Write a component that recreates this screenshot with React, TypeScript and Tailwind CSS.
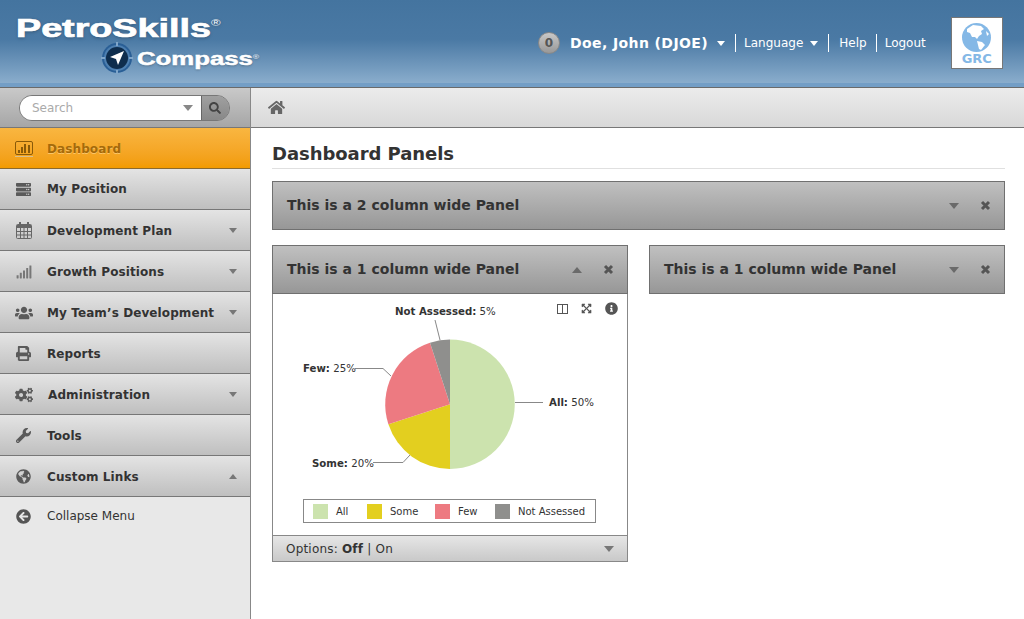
import type { ReactNode } from 'react'
import {
  FaArrowCircleLeft,
  FaCogs,
  FaExpandArrowsAlt,
  FaGlobeAmericas,
  FaHome,
  FaInfoCircle,
  FaPrint,
  FaSearch,
  FaServer,
  FaSignal,
  FaUsers,
  FaWrench,
} from 'react-icons/fa'

function Caret({ up = false, small = false, className = 'text-white' }: { up?: boolean; small?: boolean; className?: string }) {
  return (
    <svg width={small ? 8 : 10} height={small ? 5 : 6} viewBox="0 0 10 6" className={className}>
      <polygon points={up ? '0,6 10,6 5,0' : '0,0 10,0 5,6'} fill="currentColor" />
    </svg>
  )
}

function BarsIcon() {
  return (
    <svg width="18" height="16" viewBox="0 0 18 16" className="text-[#8a5a08]">
      <rect x="0.5" y="0.5" width="17" height="13" rx="1.5" fill="none" stroke="currentColor" />
      <rect x="3" y="9" width="2" height="3" fill="currentColor" />
      <rect x="6" y="6" width="2" height="6" fill="currentColor" />
      <rect x="9" y="3" width="2" height="9" fill="currentColor" />
      <rect x="13" y="4" width="2" height="8" fill="currentColor" />
      <rect x="0" y="15" width="18" height="1" fill="#d8c090" />
    </svg>
  )
}

function CalendarIcon() {
  return (
    <svg width="16" height="17" viewBox="0 0 16 17" className="text-[#666]">
      <rect x="0.5" y="2.5" width="15" height="14" rx="1" fill="none" stroke="currentColor" />
      <rect x="1" y="3" width="14" height="3" fill="currentColor" />
      <rect x="3" y="0" width="2" height="4" fill="currentColor" />
      <rect x="11" y="0" width="2" height="4" fill="currentColor" />
      <path d="M4.5 6V16M8 6V16M11.5 6V16M1 9.5H15M1 13H15" stroke="currentColor" fill="none" />
    </svg>
  )
}

function CloseIcon() {
  return (
    <svg width="11" height="11" viewBox="0 0 11 11" className="text-[#555]">
      <path d="M2 2L9 9M9 2L2 9" stroke="currentColor" strokeWidth="3" fill="none" />
    </svg>
  )
}

function CompassMark() {
  return (
    <svg width="32" height="32" viewBox="0 0 32 32">
      <circle cx="16" cy="16" r="15" fill="#2a5f96" />
      <circle cx="16" cy="16" r="13" fill="#4d7fb0" />
      <circle cx="16" cy="16" r="11" fill="#0e2d4d" />
      <rect x="15" y="0" width="2" height="4" fill="#7fa5c9" />
      <rect x="15" y="28" width="2" height="4" fill="#7fa5c9" />
      <rect x="0" y="15" width="4" height="2" fill="#7fa5c9" />
      <rect x="28" y="15" width="4" height="2" fill="#7fa5c9" />
      <polygon points="23,9 9,15 15,17 17,23" fill="#fff" />
    </svg>
  )
}

function GrcLogo() {
  return (
    <div className="flex h-[52px] w-[52px] flex-col items-center border border-[#777] bg-white pt-[5px]">
      <svg width="29" height="29" viewBox="0 0 29 29">
        <circle cx="14.5" cy="14.5" r="14.5" fill="#84b8e6" />
        <path
          d="M5 6 L11 2 L19 3 L22 6 L19 8 L20 11 L17 13 L15 16 L13 14 L10 14 L8 10 L5 9 Z"
          fill="#fff"
        />
        <path d="M15 18 L20 19 L23 22 L19 27 L17 26 L16 22 Z" fill="#fff" />
        <path d="M24 8 L27 11 L25 13 Z" fill="#fff" />
      </svg>
      <span className="text-[13px] leading-[14px] font-bold text-[#84b8e6]">GRC</span>
    </div>
  )
}

function Header() {
  return (
    <header className="flex h-[88px] items-start border-b border-[#6a6a6a] bg-gradient-to-b from-[#44749f] via-[#4a79a4] via-45% to-[#90b2d0] text-white shadow-[inset_0_-4px_0_#739ec6]">
      <div className="w-[517px] shrink-0 pt-[14px] pl-[16px]">
        <div className="h-[28px] origin-left scale-x-[1.45] font-['Liberation_Sans',sans-serif] text-[26px] leading-[28px] font-bold [-webkit-text-stroke:0.7px_white] [text-shadow:0_1px_3px_rgba(0,0,0,0.3)]">
          PetroSkills
          <sup className="top-[-11px] text-[9px] font-normal [-webkit-text-stroke:0]">®</sup>
        </div>
        <div className="ml-[85px] flex items-center gap-[4px]">
          <CompassMark />
          <div className="mt-[2px] origin-left scale-x-[1.43] font-['Liberation_Sans',sans-serif] text-[18px] leading-[24px] font-bold [-webkit-text-stroke:0.5px_white] [text-shadow:0_1px_2px_rgba(0,0,0,0.3)]">
            Compass
            <sup className="top-[-6px] text-[6px] font-normal [-webkit-text-stroke:0]">®</sup>
          </div>
        </div>
      </div>
      <div className="mt-[32px] ml-[21px] flex h-[22px] items-center">
        <span className="flex h-[22px] w-[22px] items-center justify-center rounded-full border border-[#888] bg-gradient-to-b from-[#c8c8c8] to-[#989898] text-[12px] font-bold text-[#555]">
          0
        </span>
        <span className="ml-[10px] text-[14px] font-bold tracking-[0.4px]">Doe, John (DJOE)</span>
        <span className="ml-[9px]">
          <Caret small />
        </span>
        <span className="ml-[10px] h-[18px] border-l border-white" />
        <span className="ml-[8px] text-[12px]">Language</span>
        <span className="ml-[7px]">
          <Caret small />
        </span>
        <span className="ml-[10px] h-[18px] border-l border-white" />
        <span className="ml-[10px] text-[12px]">Help</span>
        <span className="ml-[9px] h-[18px] border-l border-white" />
        <span className="ml-[8px] text-[12px]">Logout</span>
      </div>
      <div className="mt-[17px] ml-[25px]">
        <GrcLogo />
      </div>
    </header>
  )
}

function SearchBar() {
  return (
    <div className="flex h-[40px] items-center border-b border-[#777] bg-gradient-to-b from-[#c9c9c9] to-[#a6a6a6] pl-[19px]">
      <div className="flex h-[26px] w-[211px] overflow-hidden rounded-full border border-[#777]">
        <div className="flex flex-1 items-center justify-between bg-white pr-[8px] pl-[12px] text-[12px] text-[#aaa]">
          <span>Search</span>
          <Caret className="text-[#888]" />
        </div>
        <div className="flex w-[28px] items-center justify-center border-l border-[#666] bg-gradient-to-b from-[#a0a0a0] to-[#888] pr-[2px] text-[#444]">
          <FaSearch size={12} />
        </div>
      </div>
    </div>
  )
}

type MenuEntry = { label: string; icon: ReactNode; caret?: 'up' | 'down'; labelOffset?: string; nudge?: string }

const menu: MenuEntry[] = [
  { label: 'My Position', icon: <FaServer size={15} />, nudge: 'pt-0' },
  { label: 'Development Plan', icon: <CalendarIcon />, caret: 'down' },
  { label: 'Growth Positions', icon: <FaSignal size={16} className="text-[#777]" />, caret: 'down' },
  { label: 'My Team’s Development', icon: <FaUsers size={18} />, caret: 'down' },
  { label: 'Reports', icon: <FaPrint size={15} /> },
  { label: 'Administration', icon: <FaCogs size={18} />, caret: 'down', labelOffset: 'ml-[1px]' },
  { label: 'Tools', icon: <FaWrench size={15} /> },
  { label: 'Custom Links', icon: <FaGlobeAmericas size={15} />, caret: 'up' },
]

function Sidebar() {
  return (
    <aside className="flex h-[531px] w-[251px] shrink-0 flex-col border-r border-[#888] bg-[#e8e8e8]">
      <SearchBar />
      <div className="flex h-[41px] items-center border-b border-[#8a6a30] bg-gradient-to-b from-[#f9b640] to-[#f29b00] pt-[1px] text-[12px] font-bold tracking-[0.1px] text-[#a56a0a]">
        <span className="flex w-[47px] justify-center">
          <BarsIcon />
        </span>
        <span className="[text-shadow:0_1px_0_rgba(255,220,150,0.6)]">Dashboard</span>
      </div>
      {menu.map((item) => (
        <div
          key={item.label}
          className={`flex h-[41px] items-center border-b border-[#777] bg-gradient-to-b from-[#e4e4e4] to-[#bfbfbf] pr-[13px] text-[12px] font-bold tracking-[0.1px] text-[#333] ${item.nudge ?? 'pt-[1px]'}`}
        >
          <span className="flex w-[47px] justify-center text-[#5a5a5a]">{item.icon}</span>
          <span className={`flex-1 ${item.labelOffset ?? ''}`}>{item.label}</span>
          {item.caret && <Caret small up={item.caret === 'up'} className="text-[#777]" />}
        </div>
      ))}
      <div className="flex h-[38px] items-center text-[12px] text-[#333]">
        <span className="flex w-[47px] justify-center text-[#555]">
          <FaArrowCircleLeft size={15} />
        </span>
        Collapse Menu
      </div>
    </aside>
  )
}

function PanelHeader({ title, open = false }: { title: string; open?: boolean }) {
  return (
    <div className="flex h-[49px] items-center border border-[#707070] bg-gradient-to-b from-[#c0c0c0] to-[#979797] pr-[13px] pl-[14px] text-[#333]">
      <span className="flex-1 text-[14px] font-bold">{title}</span>
      <Caret up={open} className="mr-[21px] text-[#6a6a6a]" />
      <CloseIcon />
    </div>
  )
}

function PieChart() {
  const labelClass = 'fill-[#333] text-[10.2px]'
  return (
    <svg width="354" height="202" viewBox="273 294 354 202" className="font-['DejaVu_Sans',sans-serif]">
      <path d="M450 339.5 A64.75 64.75 0 0 1 450 469 Z" fill="#cce3ae" />
      <path d="M450 469 A64.75 64.75 0 0 1 388.4 424.3 L450 404.25 Z" fill="#e3cf1f" />
      <path d="M388.4 424.3 A64.75 64.75 0 0 1 430 342.7 L450 404.25 Z" fill="#ed7a81" />
      <path d="M430 342.7 A64.75 64.75 0 0 1 450 339.5 L450 404.25 Z" fill="#8f8f8d" />
      <g fill="none" stroke="#888">
        <path d="M515 402.5 H543" />
        <path d="M355 368.5 H383 L391 376" />
        <path d="M373 462.5 H403 L410 455" />
        <path d="M435 320 L440 340" />
      </g>
      <text x="395" y="315" className={labelClass}>
        <tspan fontWeight="bold">Not Assessed:</tspan> 5%
      </text>
      <text x="303" y="372" className={labelClass}>
        <tspan fontWeight="bold">Few:</tspan> 25%
      </text>
      <text x="312" y="467" className={labelClass}>
        <tspan fontWeight="bold">Some:</tspan> 20%
      </text>
      <text x="549" y="406" className={labelClass}>
        <tspan fontWeight="bold">All:</tspan> 50%
      </text>
    </svg>
  )
}

function LegendItem({ color, label, width }: { color: string; label: string; width: string }) {
  return (
    <div className={`flex items-center gap-[8px] ${width}`}>
      <span className={`h-[15px] w-[15px] ${color}`} />
      <span>{label}</span>
    </div>
  )
}

function ChartPanel() {
  return (
    <div>
      <PanelHeader title="This is a 1 column wide Panel" open />
      <div className="relative h-[241px] border-x border-[#888] bg-white">
        <div className="absolute top-[8px] right-[9px] flex items-center gap-[13px] text-[#555]">
          <svg width="11" height="12" viewBox="0 0 11 12">
            <rect x="0.5" y="1.5" width="10" height="9" fill="none" stroke="currentColor" />
            <path d="M5.5 1.5 V10.5" stroke="currentColor" />
          </svg>
          <FaExpandArrowsAlt size={11} />
          <FaInfoCircle size={13} />
        </div>
        <PieChart />
        <div className="mt-[3px] ml-[30px] flex h-[24px] w-[293px] items-center border border-[#888] pl-[9px] text-[10px] text-[#333]">
          <LegendItem color="bg-[#cce3ae]" label="All" width="w-[54px]" />
          <LegendItem color="bg-[#e3cf1f]" label="Some" width="w-[68px]" />
          <LegendItem color="bg-[#ed7a81]" label="Few" width="w-[60px]" />
          <LegendItem color="bg-[#8f8f8d]" label="Not Assessed" width="w-auto" />
        </div>
      </div>
      <div className="flex h-[27px] items-center justify-between border border-[#888] bg-gradient-to-b from-[#e6e6e6] to-[#c9c9c9] pr-[13px] pl-[13px] text-[12px] tracking-[0.2px] text-[#333]">
        <span>
          Options: <b>Off</b> | On
        </span>
        <Caret className="text-[#777]" />
      </div>
    </div>
  )
}

export default function App() {
  return (
    <div className="h-[619px] w-[1024px] overflow-hidden bg-white font-['DejaVu_Sans',sans-serif]">
      <Header />
      <div className="flex">
        <Sidebar />
        <main className="flex-1">
          <div className="flex h-[40px] items-center border-b border-[#777] bg-gradient-to-b from-[#ececec] to-[#d8d8d8] pl-[17px] text-[#666]">
            <FaHome size={17} />
          </div>
          <div className="pt-[14px] pr-[19px] pl-[21px]">
            <h1 className="border-b border-[#e0e0e0] pb-[3px] text-[18px] leading-[23px] font-bold tracking-[-0.05px] text-[#333]">
              Dashboard Panels
            </h1>
            <div className="mt-[12px] grid grid-cols-2 items-start gap-x-[21px] gap-y-[15px]">
              <div className="col-span-2">
                <PanelHeader title="This is a 2 column wide Panel" />
              </div>
              <ChartPanel />
              <PanelHeader title="This is a 1 column wide Panel" />
            </div>
          </div>
        </main>
      </div>
    </div>
  )
}
